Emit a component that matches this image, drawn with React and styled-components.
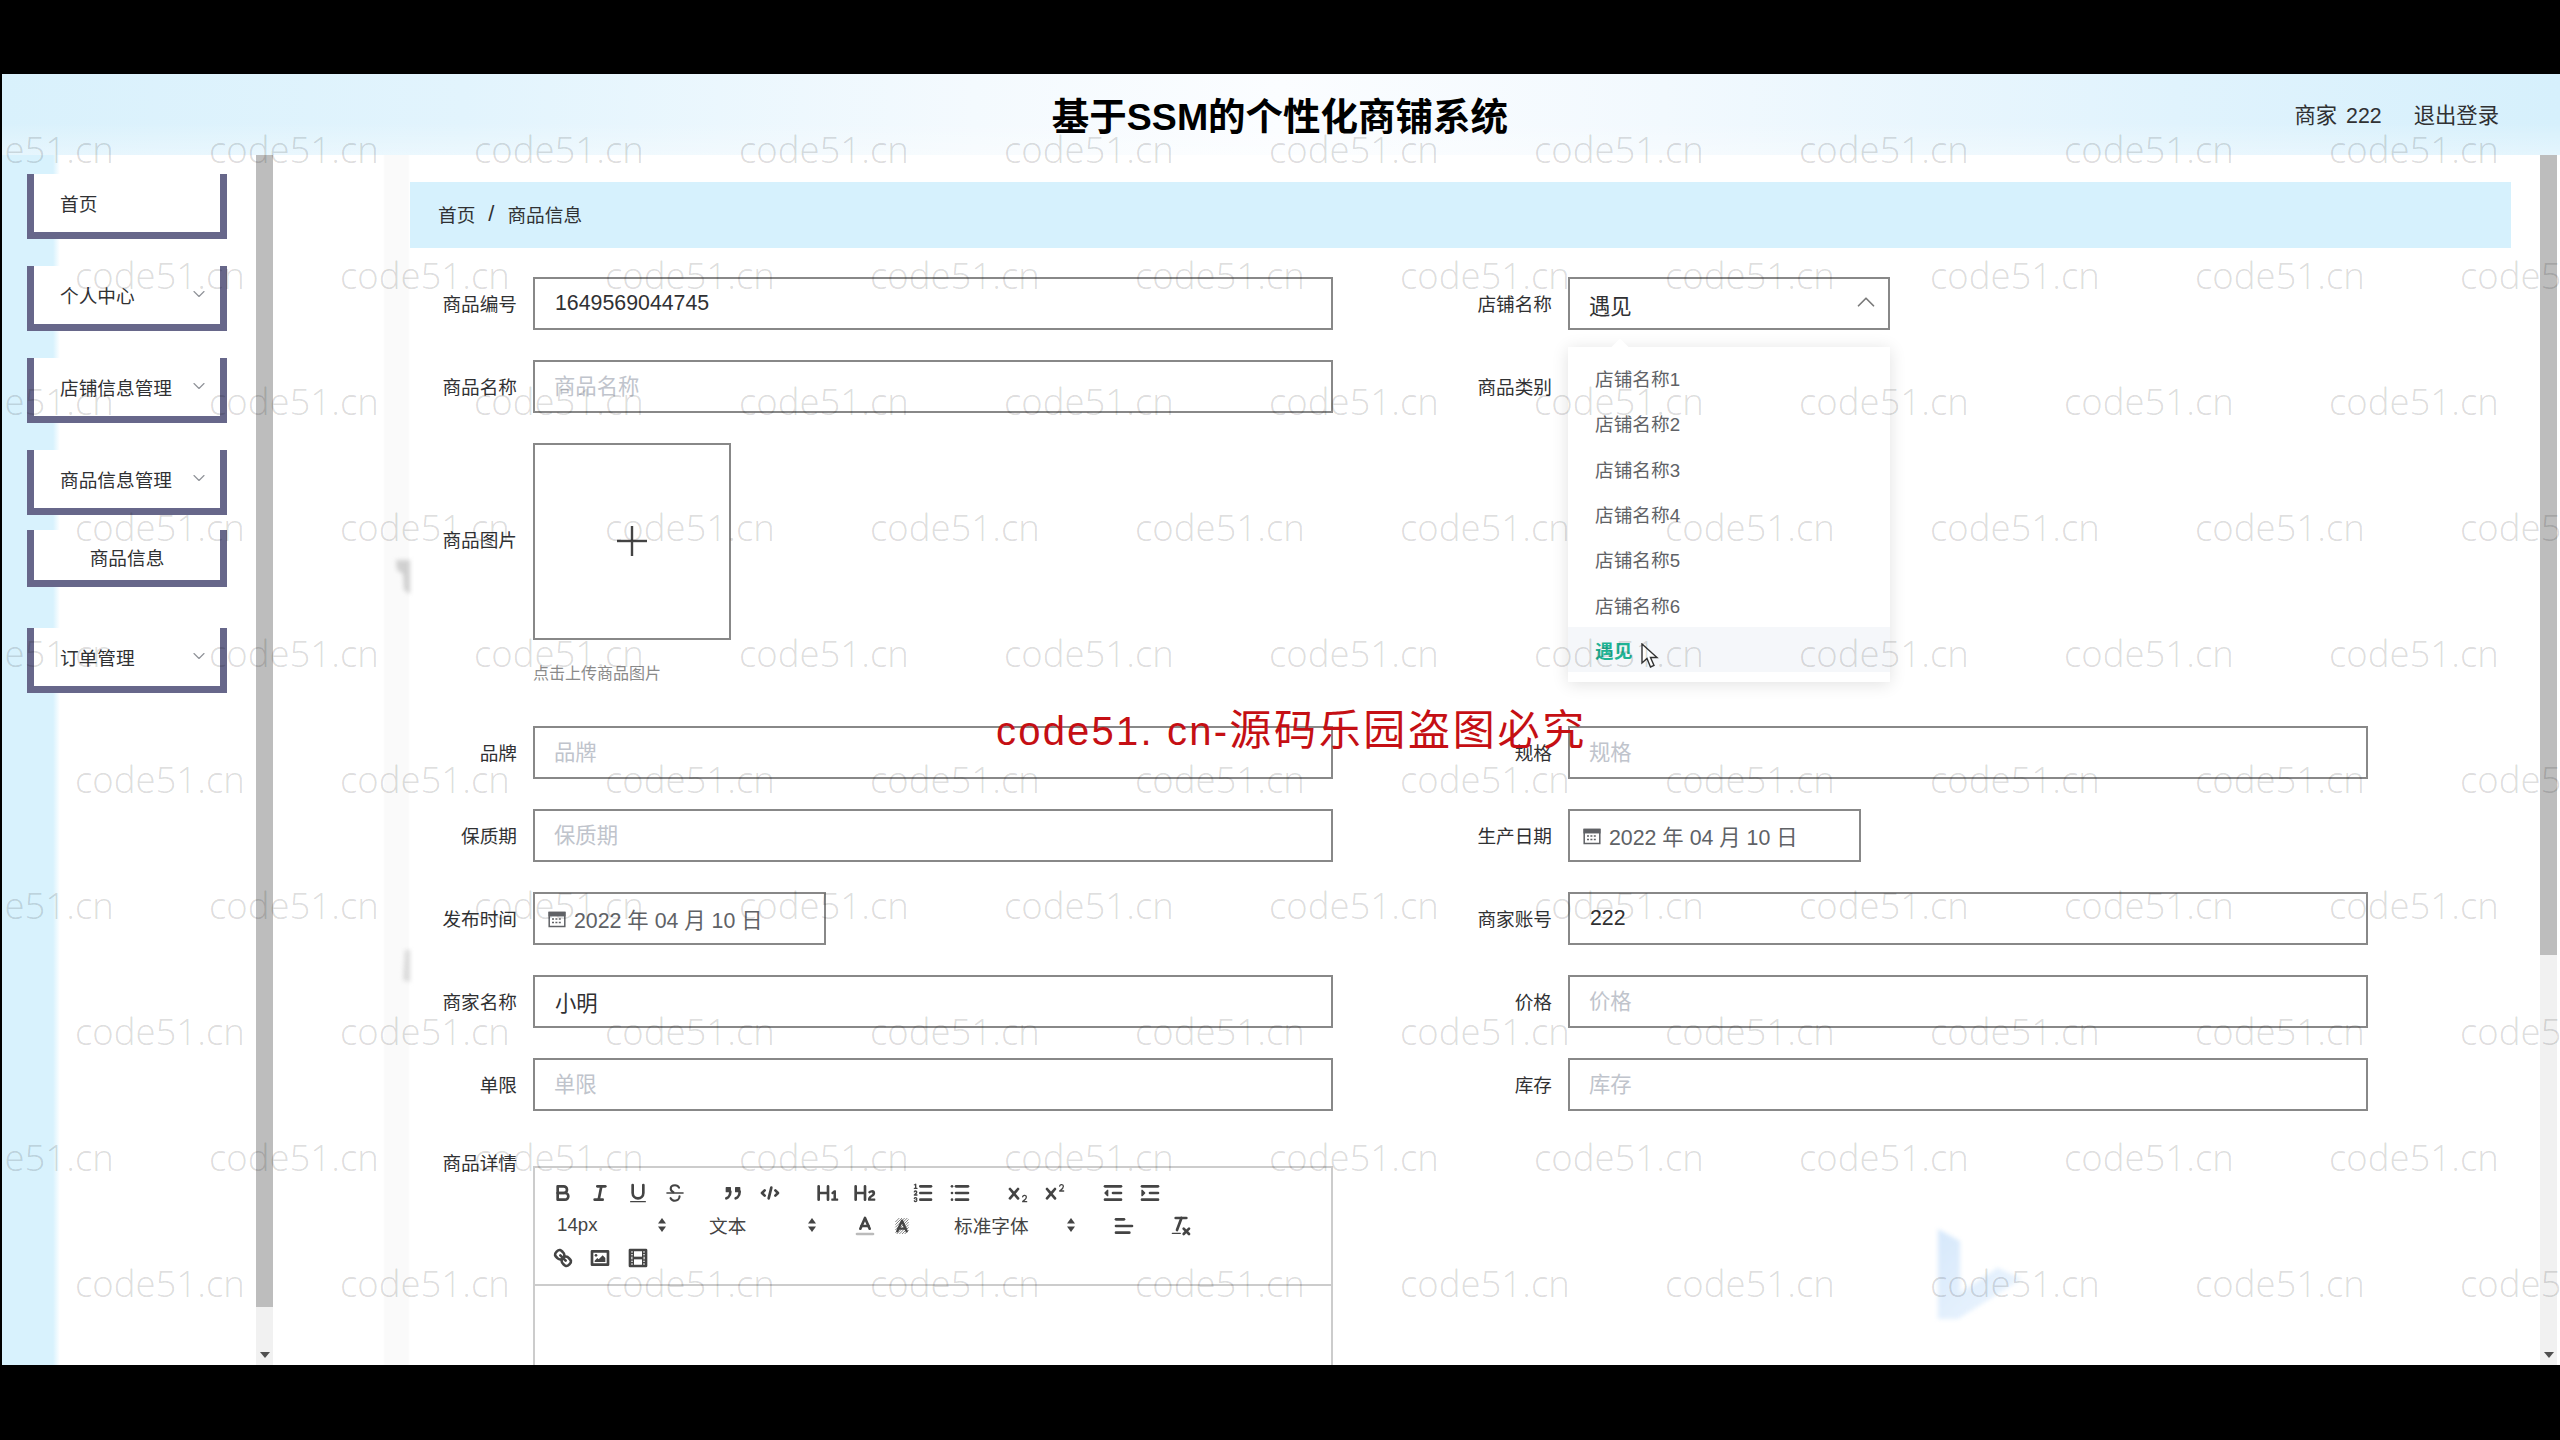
import React from 'react';
import styled, { createGlobalStyle } from 'styled-components';
import { ChevronDown, ChevronUp } from 'lucide-react';

const FONT = '"Liberation Sans", "Noto Sans CJK SC", sans-serif';

const Global = createGlobalStyle`
  html, body { margin: 0; padding: 0; background: #000; overflow: hidden; }
  * { box-sizing: border-box; }
  body { font-family: ${FONT}; }
`;

const Page = styled.div`
  position: relative;
  width: 2560px;
  height: 1440px;
  background: #000;
  padding: 74px 0 75px 2px;
`;
const Frame = styled.div`
  position: relative;
  height: 1291px;
  display: flex;
  flex-direction: column;
  overflow: hidden;
  background: #fff;
`;
const Header = styled.header`
  flex: none;
  height: 81px;
  display: grid;
  grid-template-columns: 1fr auto 1fr;
  align-items: center;
  padding-bottom: 2px;
  background:
    linear-gradient(180deg, rgba(255,255,255,0) 60%, rgba(255,255,255,.35) 100%),
    linear-gradient(90deg, #d9f1fc 0%, #e2f4fd 18%, #f4fafe 38%, #fbfdff 50%, #f2f9fe 65%, #e0f3fd 85%, #d6f0fc 100%);
`;
const Title = styled.h1`
  margin: 0 2px 0 0;
  font-size: 37.5px;
  font-weight: 700;
  color: #000;
  grid-column: 2;
  white-space: nowrap;
`;
const UserBox = styled.div`
  justify-self: end;
  display: flex;
  gap: 32px;
  padding-right: 61px;
  font-size: 21.33px;
  word-spacing: 3px;
  color: #303133;
`;
const Body = styled.div`
  flex: 1;
  min-height: 0;
  display: flex;
  padding-right: 3px;
`;
const Sidebar = styled.aside`
  flex: none;
  width: 271px;
  display: flex;
  justify-content: space-between;
  background: linear-gradient(90deg, #d8f2fd 0, #d8f2fd 51px, #fff 58px);
`;
const Menu = styled.nav`
  width: 200px;
  margin-left: 25px;
  padding-top: 19px;
  display: flex;
  flex-direction: column;
`;
const MenuItem = styled.div`
  height: ${p => (p.$sub ? 57 : 65)}px;
  margin-top: ${p => p.$mt}px;
  background: #fff;
  border: 7px solid #67678a;
  border-top: 0;
  display: flex;
  align-items: center;
  justify-content: ${p => (p.$sub ? 'center' : 'space-between')};
  padding: ${p => (p.$sub ? '2px 0 0' : '0 11px 2px 26px')};
  font-size: 18.67px;
  color: #303133;
  white-space: nowrap;
  svg { color: #909399; }
`;
const ScrollTrack = styled.div`
  position: relative;
  flex: none;
  width: 17px;
  background: #f1f1f1;
`;
const ScrollThumb = styled.div`
  height: ${p => p.$h}px;
  background: #bdbdbd;
`;
const ScrollArrow = styled.div`
  position: absolute;
  left: 4px;
  bottom: 7px;
  width: 0;
  height: 0;
  border-left: 5px solid transparent;
  border-right: 5px solid transparent;
  border-top: 6px solid #505050;
`;
const Main = styled.main`
  position: relative;
  flex: 1;
  min-width: 0;
  overflow: hidden;
  padding-top: 27px;
  background: linear-gradient(90deg, #fff 110px, #fafafa 112px, #fafafa 135px, #fff 137px);
`;
const Decor = styled.svg`
  position: absolute;
  left: ${p => p.$x}px;
  top: ${p => p.$y}px;
  filter: blur(2px);
`;
const Breadcrumb = styled.div`
  position: relative;
  height: 66px;
  margin: 0 29px 0 137px;
  padding: 0 0 3px 28px;
  background: #d6f1fd;
  display: flex;
  align-items: center;
  gap: 13px;
  font-size: 18.67px;
  color: #303133;
`;
const Sep = styled.span`
  font-size: 22px;
  font-weight: 400;
  color: #303133;
`;
const Form = styled.form`
  position: relative;
  margin-top: 29px;
  padding-left: 124px;
  display: flex;
  flex-direction: column;
  gap: 30px;
`;
const Row = styled.div`
  display: grid;
  grid-template-columns: 1035px 1035px;
  height: ${p => p.$h || 53}px;
`;
const Item = styled.div`
  display: flex;
  gap: 16px;
  align-items: ${p => (p.$top ? 'flex-start' : 'center')};
`;
const Label = styled.label`
  flex: none;
  width: 120px;
  text-align: right;
  font-size: 18.67px;
  color: #303133;
  padding-bottom: ${p => (p.$h ? 0 : 3)}px;
  line-height: ${p => (p.$h ? `${p.$h}px` : 'normal')};
`;
const Field = styled.div`
  position: relative;
  flex: none;
  width: ${p => p.$w || 800}px;
  height: 53px;
  border: 2px solid #888;
  background: #fff;
  padding: 0 20px ${p => (p.$ph ? 5 : 0)}px ${p => (p.$ph ? 19 : 20)}px;
  display: flex;
  align-items: center;
  justify-content: space-between;
  font-size: 21.33px;
  color: ${p => (p.$ph ? '#c0c4cc' : '#303133')};
  white-space: nowrap;
`;
const DateField = styled(Field)`
  justify-content: flex-start;
  gap: 8px;
  padding: 0 13px;
  color: #606266;
`;
const SelectWrap = styled.div`
  position: relative;
  flex: none;
  width: 322px;
`;
const SelectValue = styled.span`
  padding-top: 2px;
  margin-left: -1px;
`;
const Dropdown = styled.ul`
  position: absolute;
  z-index: 3;
  top: 70px;
  left: 0;
  width: 322px;
  height: 335px;
  margin: 0;
  padding: 8px 0 10px;
  list-style: none;
  background: #fff;
  box-shadow: 0 2px 16px rgba(0,0,0,.12);
  &::before {
    content: '';
    position: absolute;
    top: -6px;
    left: 46px;
    width: 12px;
    height: 12px;
    background: #fff;
    transform: rotate(45deg);
  }
`;
const Option = styled.li`
  position: relative;
  height: 45.3px;
  padding-left: 27px;
  display: flex;
  align-items: center;
  font-size: 18.67px;
  color: ${p => (p.$on ? '#1fb394' : '#606266')};
  font-weight: ${p => (p.$on ? 700 : 400)};
  background: ${p => (p.$on ? '#f5f7fa' : 'transparent')};
`;
const Cursor = styled.svg`
  position: absolute;
  left: 73px;
  top: 16px;
`;
const UploadCol = styled.div`
  display: flex;
  flex-direction: column;
  gap: 22px;
`;
const UploadBox = styled.div`
  width: 198px;
  height: 197px;
  border: 2px solid #888;
  background: #fff;
  padding-bottom: 2px;
  display: flex;
  align-items: center;
  justify-content: center;
  color: #444;
`;
const Hint = styled.div`
  font-size: 16px;
  line-height: 18px;
  margin-top: 3px;
  color: #8a8a8a;
`;
const EditorRow = styled.div`
  display: flex;
  gap: 16px;
  margin-top: -1px;
`;
const Editor = styled.div`
  flex: none;
  width: 800px;
  height: 300px;
  margin-top: 26px;
  border: 2px solid #ccc;
  background: #fff;
`;
const Toolbar = styled.div`
  height: 118px;
  padding: 9px 0 0 9px;
  border-bottom: 2px solid #ccc;
  color: #444;
`;
const ToolRow = styled.div`
  display: flex;
  height: 32.5px;
  align-items: center;
`;
const ToolGroup = styled.div`
  display: flex;
  align-items: center;
  margin-right: 20px;
`;
const Tool = styled.span`
  width: 37.5px;
  height: 32px;
  display: flex;
  align-items: center;
  justify-content: center;
  svg { display: block; }
`;
const Picker = styled.div`
  width: ${p => p.$w}px;
  height: 32px;
  margin-right: 20px;
  padding: 0 7px 2px 13px;
  display: flex;
  align-items: center;
  justify-content: space-between;
  font-size: 18.67px;
  color: #444;
`;
const WatermarkLayer = styled.div`
  position: absolute;
  inset: 0;
  z-index: 5;
  padding-top: 12px;
  overflow: hidden;
  pointer-events: none;
`;
const WatermarkRow = styled.div`
  height: 126px;
  display: flex;
  align-items: center;
  gap: 93px;
  margin-left: ${p => (p.$odd ? -58 : 73)}px;
  width: 3000px;
`;
const Mark = styled.span`
  flex: none;
  width: 172px;
  font-family: "Open Sans", sans-serif;
  font-weight: 300;
  font-size: 36.5px;
  color: rgba(0,0,0,.15);
  white-space: nowrap;
`;
const Stamp = styled.div`
  position: absolute;
  z-index: 6;
  left: 996px;
  top: 703px;
  font-size: 42px;
  letter-spacing: 2.7px;
  line-height: 56px;
  color: #c50f14;
  white-space: nowrap;
`;
const StampLatin = styled.span`
  font-size: 40px;
  letter-spacing: 2.2px;
`;

const Stroke = ({ children, size = 24 }) => (
  <svg width={size} height={size} viewBox="0 0 18 18" fill="none" stroke="#444" strokeWidth="2" strokeLinecap="round" strokeLinejoin="round">
    {children}
  </svg>
);
const F = { fill: '#444', stroke: 'none' };
const xPath = 'M9.65,5.241a1,1,0,0,0-1.409.108L6,7.964,3.759,5.349A1,1,0,0,0,2.192,6.59178Q2.21541,6.6213,2.241,6.649L4.684,9.5,2.241,12.35A1,1,0,0,0,3.71,13.70722q0.02557-.02768.049-0.05722L6,11.036,8.241,13.65a1,1,0,1,0,1.567-1.24277Q9.78459,12.3777,9.759,12.35L7.316,9.5,9.759,6.651A1,1,0,0,0,9.65,5.241Z';

const I = {
  bold: <Stroke><path d="M5,4H9.5A2.5,2.5,0,0,1,12,6.5v0A2.5,2.5,0,0,1,9.5,9H5V4Z" /><path d="M5,9h5.5A2.5,2.5,0,0,1,13,11.5v0A2.5,2.5,0,0,1,10.5,14H5V9Z" /></Stroke>,
  italic: <Stroke><line x1="7" x2="13" y1="4" y2="4" /><line x1="5" x2="11" y1="14" y2="14" /><line x1="8" x2="10" y1="14" y2="4" /></Stroke>,
  underline: <Stroke><path d="M5,3V9a4,4,0,0,0,8,0V3" /><rect {...F} height="1" rx=".5" ry=".5" width="12" x="3" y="15" /></Stroke>,
  strike: <Stroke><line x1="3" x2="15" y1="9" y2="9" strokeWidth="1.2" /><path strokeWidth="1.6" d="M12,5C11.5,3.9 10.4,3.2 9,3.2 7.2,3.2 5.8,4.2 5.8,5.8c0,1.2 .8,2 2,2.6" /><path strokeWidth="1.6" d="M12.4,11.5c0,2-1.6,3.3-3.4,3.3-1.5,0-2.7-.7-3.3-1.9" /></Stroke>,
  quote: <Stroke><rect fill="#444" stroke="#444" strokeWidth="1" height="3" width="3" x="4" y="5" /><rect fill="#444" stroke="#444" strokeWidth="1" height="3" width="3" x="11" y="5" /><path d="M7,8c0,4.031-3,5-3,5" /><path d="M14,8c0,4.031-3,5-3,5" /></Stroke>,
  code: <Stroke><polyline points="5 7 3 9 5 11" /><polyline points="13 7 15 9 13 11" /><line x1="10" x2="8" y1="5" y2="13" /></Stroke>,
  h1: <Stroke><path {...F} d="M10,4V14a1,1,0,0,1-2,0V10H3v4a1,1,0,0,1-2,0V4A1,1,0,0,1,3,4V8H8V4a1,1,0,0,1,2,0Zm6.06787,9.209H14.98975V7.59863a.54085.54085,0,0,0-.605-.60547h-.62744a1.01119,1.01119,0,0,0-.748.29688L11.645,8.56641a.5435.5435,0,0,0-.022.8584l.28613.30762a.53861.53861,0,0,0,.84717.0332l.09912-.08789a1.2137,1.2137,0,0,0,.2417-.35254h.02246s-.01123.30859-.01123.60547V13.209H12.041a.54085.54085,0,0,0-.605.60547v.43945a.54085.54085,0,0,0,.605.60547h4.02686a.54085.54085,0,0,0,.605-.60547v-.43945A.54085.54085,0,0,0,16.06787,13.209Z" /></Stroke>,
  h2: <Stroke><path {...F} d="M16.73975,13.81445v.43945a.54085.54085,0,0,1-.605.60547H11.855a.58392.58392,0,0,1-.64893-.60547V14.0127c0-2.90527,3.39941-3.42187,3.39941-4.55469a.77675.77675,0,0,0-.84717-.78125,1.17684,1.17684,0,0,0-.83594.38477c-.2749.26367-.561.374-.85791.13184l-.4292-.34082c-.30811-.24219-.38525-.51758-.1543-.81445a2.97155,2.97155,0,0,1,2.45361-1.17676,2.45393,2.45393,0,0,1,2.68408,2.40918c0,2.45312-3.1792,2.92676-3.27832,3.93848h2.79443A.54085.54085,0,0,1,16.73975,13.81445ZM9,3A.99974.99974,0,0,0,8,4V8H3V4A1,1,0,0,0,1,4V14a1,1,0,0,0,2,0V10H8v4a1,1,0,0,0,2,0V4A.99974.99974,0,0,0,9,3Z" /></Stroke>,
  ol: <Stroke><line x1="7" x2="15" y1="4" y2="4" /><line x1="7" x2="15" y1="9" y2="9" /><line x1="7" x2="15" y1="14" y2="14" /><line strokeWidth="1" x1="2.5" x2="4.5" y1="5.5" y2="5.5" /><path {...F} d="M3.5,6A0.5,0.5,0,0,1,3,5.5V3.085l-0.276.138A0.5,0.5,0,0,1,2.053,3c-0.124-.247-0.023-0.324.224-0.447l1-.5A0.5,0.5,0,0,1,4,2.5v3A0.5,0.5,0,0,1,3.5,6Z" /><path strokeWidth="1" d="M4.5,10.5h-2c0-.234,1.85-1.076,1.85-2.234A0.959,0.959,0,0,0,2.5,8.156" /><path strokeWidth="1" d="M2.5,14.846a0.959,0.959,0,0,0,1.85-.109A0.7,0.7,0,0,0,3.75,14a0.688,0.688,0,0,0,.6-0.736,0.959,0.959,0,0,0-1.85-.109" /></Stroke>,
  ul: <Stroke><line x1="6" x2="15" y1="4" y2="4" /><line x1="6" x2="15" y1="9" y2="9" /><line x1="6" x2="15" y1="14" y2="14" /><line x1="3" x2="3" y1="4" y2="4" /><line x1="3" x2="3" y1="9" y2="9" /><line x1="3" x2="3" y1="14" y2="14" /></Stroke>,
  sub: <Stroke><path {...F} d="M15.5,15H13.861a3.858,3.858,0,0,0,1.914-2.975,1.8,1.8,0,0,0-1.6-1.751A1.921,1.921,0,0,0,12.021,11.7a0.50013,0.50013,0,1,0,.957.291h0a0.914,0.914,0,0,1,1.053-.725,0.81,0.81,0,0,1,.744.762c0,1.076-1.16971,1.86982-1.93971,2.43082A1.45639,1.45639,0,0,0,12,15.5a0.5,0.5,0,0,0,.5.5h3A0.5,0.5,0,0,0,15.5,15Z" /><path {...F} d={xPath} /></Stroke>,
  sup: <Stroke><path {...F} d="M15.5,7H13.861a4.015,4.015,0,0,0,1.914-2.975,1.8,1.8,0,0,0-1.6-1.751A1.922,1.922,0,0,0,12.021,3.7a0.5,0.5,0,1,0,.957.291,0.917,0.917,0,0,1,1.053-.725,0.81,0.81,0,0,1,.744.762c0,1.077-1.164,1.925-1.934,2.486A1.423,1.423,0,0,0,12,7.5a0.5,0.5,0,0,0,.5.5h3A0.5,0.5,0,0,0,15.5,7Z" /><path {...F} d={xPath} /></Stroke>,
  outdent: <Stroke><line x1="3" x2="15" y1="14" y2="14" /><line x1="3" x2="15" y1="4" y2="4" /><line x1="9" x2="15" y1="9" y2="9" /><polyline fill="#444" strokeWidth="1" points="5 7 5 11 3 9 5 7" /></Stroke>,
  indent: <Stroke><line x1="3" x2="15" y1="14" y2="14" /><line x1="3" x2="15" y1="4" y2="4" /><line x1="9" x2="15" y1="9" y2="9" /><polyline fill="#444" strokeWidth="1" points="3 7 3 11 5 9 3 7" /></Stroke>,
  color: <Stroke><line x1="3" x2="15" y1="15" y2="15" stroke="#bbb" /><polyline points="5.5 11 9 3 12.5 11" /><line x1="11.63" x2="6.38" y1="9" y2="9" /></Stroke>,
  background: <Stroke>
    <g stroke="#666" strokeWidth=".6" strokeLinecap="butt">
      <line x1="4" x2="7" y1="6" y2="3" /><line x1="4" x2="9" y1="8" y2="3" /><line x1="4" x2="11" y1="10" y2="3" /><line x1="4" x2="13" y1="12" y2="3" /><line x1="4" x2="14" y1="14" y2="4" /><line x1="5" x2="14" y1="15" y2="6" /><line x1="7" x2="14" y1="15" y2="8" /><line x1="9" x2="14" y1="15" y2="10" /><line x1="11" x2="14" y1="15" y2="12" />
    </g>
    <polyline strokeWidth="1.8" points="5.5 13 9 5 12.5 13" /><line strokeWidth="1.8" x1="11.63" x2="6.38" y1="11" y2="11" />
  </Stroke>,
  align: <Stroke><line x1="3" x2="15" y1="9" y2="9" /><line x1="3" x2="13" y1="14" y2="14" /><line x1="3" x2="9" y1="4" y2="4" /></Stroke>,
  clean: <Stroke><line x1="5" x2="13" y1="3" y2="3" /><line x1="6" x2="9.35" y1="12" y2="3" /><line x1="11" x2="15" y1="11" y2="15" /><line x1="15" x2="11" y1="11" y2="15" /><rect {...F} height="1" rx=".5" ry=".5" width="7" x="2" y="14" /></Stroke>,
  link: <Stroke><line x1="7" x2="11" y1="7" y2="11" /><path d="M8.9,4.577a3.476,3.476,0,0,1,.36,4.679A3.476,3.476,0,0,1,4.577,8.9C3.185,7.5,2.035,6.4,4.217,4.217S7.5,3.185,8.9,4.577Z" /><path d="M13.423,9.1a3.476,3.476,0,0,0-4.679-.36,3.476,3.476,0,0,0,.36,4.679c1.392,1.392,2.5,2.542,4.679.36S14.815,10.5,13.423,9.1Z" /></Stroke>,
  image: <Stroke><rect height="10" width="12" x="3" y="4" /><circle {...F} cx="6" cy="7" r="1" /><polyline {...F} points="5 12 5 11 7 9 8 10 11 7 13 9 13 12 5 12" /></Stroke>,
  video: <Stroke><rect height="12" width="12" x="3" y="3" /><rect {...F} height="12" width="1" x="5" y="3" /><rect {...F} height="12" width="1" x="12" y="3" /><rect {...F} height="2" width="8" x="5" y="8" /><rect {...F} height="1" width="3" x="3" y="5" /><rect {...F} height="1" width="3" x="3" y="7" /><rect {...F} height="1" width="3" x="3" y="10" /><rect {...F} height="1" width="3" x="3" y="12" /><rect {...F} height="1" width="3" x="12" y="5" /><rect {...F} height="1" width="3" x="12" y="7" /><rect {...F} height="1" width="3" x="12" y="10" /><rect {...F} height="1" width="3" x="12" y="12" /></Stroke>,
};

const PickerArrows = () => (
  <svg width="14" height="20" viewBox="0 0 14 20" fill="#444">
    <polygon points="7,3 11,8.5 3,8.5" />
    <polygon points="7,17 11,11.5 3,11.5" />
  </svg>
);
const CalendarIcon = () => (
  <svg width="18" height="18" viewBox="0 0 18 18" fill="none" stroke="#606266" strokeWidth="1.5">
    <rect x="1.2" y="2.5" width="15.6" height="14" />
    <rect x="1.2" y="2.5" width="15.6" height="3.2" fill="#606266" />
    <line x1="4" x2="14" y1="9" y2="9" strokeDasharray="2 1.4" />
    <line x1="4" x2="14" y1="12.5" y2="12.5" strokeDasharray="2 1.4" />
  </svg>
);

const groups = [['bold', 'italic', 'underline', 'strike'], ['quote', 'code'], ['h1', 'h2'], ['ol', 'ul'], ['sub', 'sup'], ['outdent', 'indent']];
const options = ['店铺名称1', '店铺名称2', '店铺名称3', '店铺名称4', '店铺名称5', '店铺名称6'];
const menu = [
  { t: '首页', mt: 0 },
  { t: '个人中心', mt: 27, c: true },
  { t: '店铺信息管理', mt: 27, c: true },
  { t: '商品信息管理', mt: 27, c: true },
  { t: '商品信息', mt: 15, sub: true },
  { t: '订单管理', mt: 41, c: true },
];

const Pair = ({ label, children }) => (
  <Item><Label>{label}</Label>{children}</Item>
);

export default function App() {
  return (
    <Page>
      <Global />
      <Frame>
        <Header>
          <Title>基于SSM的个性化商铺系统</Title>
          <UserBox><span>商家 222</span><span>退出登录</span></UserBox>
        </Header>
        <Body>
          <Sidebar>
            <Menu>
              {menu.map(m => (
                <MenuItem key={m.t} $mt={m.mt} $sub={m.sub}>
                  <span>{m.t}</span>
                  {m.c && <ChevronDown size={20} strokeWidth={1.4} />}
                </MenuItem>
              ))}
            </Menu>
            <ScrollTrack><ScrollThumb $h={1152} /><ScrollArrow /></ScrollTrack>
          </Sidebar>
          <Main>
            <Decor $x={123} $y={405} width="16" height="34" viewBox="0 0 16 34"><polygon points="0,0 14,0 14,34 8,30 7,14 1,10" fill="#d0d0d0" /></Decor>
            <Decor $x={129} $y={795} width="8" height="32" viewBox="0 0 8 32"><polygon points="3,0 8,0 8,32 1,30" fill="#dadada" /></Decor>
            <Decor $x={1665} $y={1072} width="86" height="94" viewBox="0 0 86 94">
              <defs>
                <linearGradient id="lg" x1="0" y1="0" x2="1" y2="1"><stop offset="0" stopColor="#d6e8fb" /><stop offset="1" stopColor="#eef6fe" /></linearGradient>
              </defs>
              <polygon points="0,2 22,14 22,66 58,42 58,40 84,52 20,92 0,92" fill="url(#lg)" />
            </Decor>
            <Breadcrumb><span>首页</span><Sep>/</Sep><span>商品信息</span></Breadcrumb>
            <Form>
              <Row>
                <Pair label="商品编号"><Field>1649569044745</Field></Pair>
                <Pair label="店铺名称">
                  <SelectWrap>
                    <Field $w={322}><SelectValue>遇见</SelectValue><ChevronUp size={30} strokeWidth={1.4} color="#7a7a7a" style={{ marginRight: -13, marginTop: -3 }} /></Field>
                    <Dropdown>
                      {options.map(o => <Option key={o}>{o}</Option>)}
                      <Option $on>遇见
                        <Cursor width="18" height="26" viewBox="0 0 18 26"><path d="M1,1 L1,20 L6,15.5 L9.5,24 L13,22.5 L9.5,14.5 L16,14.5 Z" fill="#fff" stroke="#333" strokeWidth="1.4" /></Cursor>
                      </Option>
                    </Dropdown>
                  </SelectWrap>
                </Pair>
              </Row>
              <Row>
                <Pair label="商品名称"><Field $ph>商品名称</Field></Pair>
                <Pair label="商品类别"><Field $w={322} /></Pair>
              </Row>
              <Row $h={253}>
                <Item $top>
                  <Label $h={195}>商品图片</Label>
                  <UploadCol>
                    <UploadBox>
                      <svg width="30" height="30" viewBox="0 0 30 30" stroke="#444" strokeWidth="2.4"><line x1="15" x2="15" y1="0" y2="30" /><line x1="0" x2="30" y1="15" y2="15" /></svg>
                    </UploadBox>
                    <Hint>点击上传商品图片</Hint>
                  </UploadCol>
                </Item>
              </Row>
              <Row>
                <Pair label="品牌"><Field $ph>品牌</Field></Pair>
                <Pair label="规格"><Field $ph>规格</Field></Pair>
              </Row>
              <Row>
                <Pair label="保质期"><Field $ph>保质期</Field></Pair>
                <Pair label="生产日期"><DateField $w={293}><CalendarIcon /><span>2022 年 04 月 10 日</span></DateField></Pair>
              </Row>
              <Row>
                <Pair label="发布时间"><DateField $w={293}><CalendarIcon /><span>2022 年 04 月 10 日</span></DateField></Pair>
                <Pair label="商家账号"><Field>222</Field></Pair>
              </Row>
              <Row>
                <Pair label="商家名称"><Field>小明</Field></Pair>
                <Pair label="价格"><Field $ph>价格</Field></Pair>
              </Row>
              <Row>
                <Pair label="单限"><Field $ph>单限</Field></Pair>
                <Pair label="库存"><Field $ph>库存</Field></Pair>
              </Row>
              <EditorRow>
                <Label $h={48}>商品详情</Label>
                <Editor>
                  <Toolbar>
                    <ToolRow>
                      {groups.map((g, i) => (
                        <ToolGroup key={i}>{g.map(n => <Tool key={n}>{I[n]}</Tool>)}</ToolGroup>
                      ))}
                    </ToolRow>
                    <ToolRow>
                      <Picker $w={132}><span>14px</span><PickerArrows /></Picker>
                      <Picker $w={130}><span>文本</span><PickerArrows /></Picker>
                      <ToolGroup><Tool>{I.color}</Tool><Tool>{I.background}</Tool></ToolGroup>
                      <Picker $w={144}><span>标准字体</span><PickerArrows /></Picker>
                      <ToolGroup><Tool>{I.align}</Tool></ToolGroup>
                      <ToolGroup><Tool>{I.clean}</Tool></ToolGroup>
                    </ToolRow>
                    <ToolRow>
                      <ToolGroup><Tool>{I.link}</Tool><Tool>{I.image}</Tool><Tool>{I.video}</Tool></ToolGroup>
                    </ToolRow>
                  </Toolbar>
                </Editor>
              </EditorRow>
            </Form>
          </Main>
          <ScrollTrack><ScrollThumb $h={800} /><ScrollArrow /></ScrollTrack>
        </Body>
        <WatermarkLayer>
          {Array.from({ length: 10 }, (_, r) => (
            <WatermarkRow key={r} $odd={r % 2 === 0}>
              {Array.from({ length: 11 }, (_, c) => <Mark key={c}>code51.cn</Mark>)}
            </WatermarkRow>
          ))}
        </WatermarkLayer>
      </Frame>
      <Stamp><StampLatin>code51. cn-</StampLatin>源码乐园盗图必究</Stamp>
    </Page>
  );
}
